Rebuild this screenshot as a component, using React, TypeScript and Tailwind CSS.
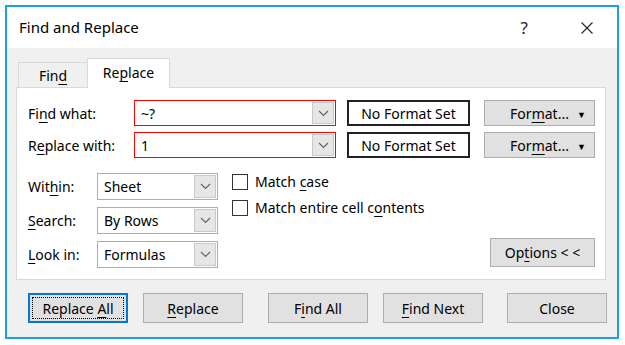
import React from 'react';

const font = { fontFamily: '"Noto Sans", "Open Sans", sans-serif' };

const U = ({ children }: { children: React.ReactNode }) => (
    <span className="underline decoration-1 underline-offset-[3px]">{children}</span>
);

const Chevron = () => (
    <svg width="11" height="7" viewBox="0 0 11 7" fill="none">
        <path d="M1 1 L5.5 5.5 L10 1" stroke="#606060" strokeWidth="1.1" />
    </svg>
);

interface ComboProps {
    value: string;
    width: string;
    red?: boolean;
}

const Combo = ({ value, width, red }: ComboProps) => (
    <div
        className={`flex items-stretch bg-white ${width} ${red ? 'h-[26px] border border-[#ff0000]' : 'h-[27px] border border-[#adadad]'}`}
    >
        <div className="flex flex-1 items-center pl-[6px] text-[14px] text-black">{value}</div>
        <div className="m-px flex w-[22px] items-center justify-center border border-[#c9c9c9] bg-[#e6e6e6]">
            <Chevron />
        </div>
    </div>
);

const Btn = ({ children, cls }: { children: React.ReactNode; cls: string }) => (
    <div className={`flex items-center justify-center border border-[#adadad] bg-[#e1e1e1] text-[14px] text-black ${cls}`}>
        <span>{children}</span>
    </div>
);

const Check = ({ children }: { children: React.ReactNode }) => (
    <div className="flex h-[17px] items-center gap-[7px]">
        <div className="h-[16px] w-[16px] border border-[#333] bg-white" />
        <span className="text-[14px] text-black">{children}</span>
    </div>
);

const FormatBtn = () => (
    <div className="relative ml-[14px] flex h-[26px] w-[111px] items-center justify-center border border-[#adadad] bg-[#e1e1e1] text-[14px] text-black">
        <span>
            For<U>m</U>at...
        </span>
        <span className="absolute right-[8px] top-[7px] text-[9px]">▼</span>
    </div>
);

export default function App() {
    return (
        <div className="h-[345px] w-[625px] bg-white pl-[5px] pt-[5px]" style={font}>
            <div className="flex h-[334px] w-[614px] flex-col border-2 border-[#1ba1e2] bg-[#f0f0f0]">
                {/* Title bar */}
                <div className="flex h-[41px] items-center bg-white pl-[12px] pr-[24px]">
                    <span className="flex-1 text-[15px] text-black">Find and Replace</span>
                    <span className="mr-[53px] text-[17px] text-[#222]">?</span>
                    <svg width="12" height="12" viewBox="0 0 12 12">
                        <path d="M0.5 0.5 L11.5 11.5 M11.5 0.5 L0.5 11.5" stroke="#222" strokeWidth="1.1" />
                    </svg>
                </div>

                {/* Body */}
                <div className="pl-[9px] pt-[10px]">
                    {/* Tabs */}
                    <div className="ml-[2px] flex h-[29px] items-end">
                        <div className="flex h-[25px] w-[69px] items-center justify-center border-l border-t border-[#d9d9d9] text-[14px] text-black">
                            <span>
                                Fin<U>d</U>
                            </span>
                        </div>
                        <div className="relative z-10 -mb-px flex h-[30px] w-[83px] items-center justify-center border-l border-r border-t border-[#d9d9d9] bg-white pb-[2px] text-[14px] text-black">
                            <span>
                                Re<U>p</U>lace
                            </span>
                        </div>
                    </div>

                    {/* Panel */}
                    <div className="flex h-[193px] w-[590px] flex-col border border-[#d9d9d9] bg-white pl-[11px] pt-[12px]">
                        <div className="flex flex-col gap-[6px]">
                            <div className="flex items-center">
                                <span className="w-[106px] text-[14px] text-black">
                                    Fi<U>n</U>d what:
                                </span>
                                <Combo value="~?" width="w-[202px]" red />
                                <div className="ml-[11px] flex h-[26px] w-[123px] items-center justify-center border-2 border-[#222] text-[14px] text-black">
                                    No Format Set
                                </div>
                                <FormatBtn />
                            </div>
                            <div className="flex items-center">
                                <span className="w-[106px] text-[14px] text-black">
                                    R<U>e</U>place with:
                                </span>
                                <Combo value="1" width="w-[202px]" red />
                                <div className="ml-[11px] flex h-[26px] w-[123px] items-center justify-center border-2 border-[#222] text-[14px] text-black">
                                    No Format Set
                                </div>
                                <FormatBtn />
                            </div>
                        </div>

                        <div className="mt-[15px] flex">
                            <div className="flex flex-col gap-[7px]">
                                <div className="flex items-center">
                                    <span className="w-[69px] text-[14px] text-black">
                                        Wit<U>h</U>in:
                                    </span>
                                    <Combo value="Sheet" width="w-[121px]" />
                                </div>
                                <div className="flex items-center">
                                    <span className="w-[69px] text-[14px] text-black">
                                        <U>S</U>earch:
                                    </span>
                                    <Combo value="By Rows" width="w-[121px]" />
                                </div>
                                <div className="flex items-center">
                                    <span className="w-[69px] text-[14px] text-black">
                                        <U>L</U>ook in:
                                    </span>
                                    <Combo value="Formulas" width="w-[121px]" />
                                </div>
                            </div>
                            <div className="ml-[14px] flex flex-col gap-[9px]">
                                <Check>
                                    Match <U>c</U>ase
                                </Check>
                                <Check>
                                    Match entire cell c<U>o</U>ntents
                                </Check>
                            </div>
                            <div className="ml-auto mr-[10px] flex items-end">
                                <Btn cls="h-[29px] w-[105px] mb-px">
                                    Op<U>t</U>ions &lt; &lt;
                                </Btn>
                            </div>
                        </div>
                    </div>
                </div>

                {/* Bottom buttons */}
                <div className="flex pl-[21px] pt-[13px]">
                    <div className="flex h-[30px] w-[100px] items-center justify-center border-2 border-[#0078d7] bg-[#e1e1e1] p-[2px]">
                        <div className="flex h-full w-full items-center justify-center border border-dotted border-black text-[14px] text-black">
                            <span>
                                Replace <U>A</U>ll
                            </span>
                        </div>
                    </div>
                    <Btn cls="ml-[15px] h-[30px] w-[100px]">
                        <U>R</U>eplace
                    </Btn>
                    <Btn cls="ml-[25px] h-[30px] w-[100px]">
                        F<U>i</U>nd All
                    </Btn>
                    <Btn cls="ml-[15px] h-[30px] w-[100px]">
                        <U>F</U>ind Next
                    </Btn>
                    <Btn cls="ml-[24px] h-[30px] w-[100px]">Close</Btn>
                </div>
            </div>
        </div>
    );
}
